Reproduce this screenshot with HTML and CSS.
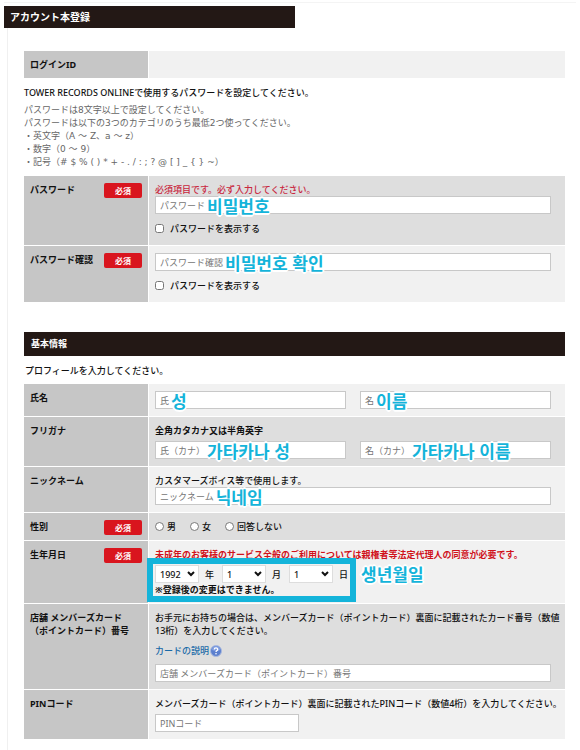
FILE: index.html
```html
<!DOCTYPE html>
<html lang="ja">
<head>
    <meta charset="UTF-8">
    <meta name="viewport" content="width=device-width, initial-scale=1">
    <title>アカウント本登録</title>
    <link rel="stylesheet" href="styles.css">
</head>
<body>
    <div class="page">
        <h1 class="page-title">アカウント本登録</h1>
        <form class="content">
            <div class="rows">
                <div class="row">
                    <div class="row-label">ログインID</div>
                    <div class="row-value"></div>
                </div>
            </div>

            <p class="lead">TOWER RECORDS ONLINEで使用するパスワードを設定してください。</p>
            <p class="rules">
                パスワードは8文字以上で設定してください。<br>
                パスワードは以下の3つのカテゴリのうち最低2つ使ってください。<br>
                ・英文字（A ～ Z、a ～ z）<br>
                ・数字（0 ～ 9）<br>
                ・記号（# $ % ( ) * + - . / : ; ? @ [ ] _ { } ~）
            </p>

            <div class="rows">
                <div class="row dark">
                    <div class="row-label">パスワード <span class="required">必須</span></div>
                    <div class="row-value tall">
                        <p class="error">必須項目です。必ず入力してください。</p>
                        <div class="field">
                            <input type="password" id="password">
                            <label for="password">パスワード <span class="note" lang="ko">비밀번호</span></label>
                        </div>
                        <label class="check"><input type="checkbox"> パスワードを表示する</label>
                    </div>
                </div>
                <div class="row">
                    <div class="row-label">パスワード確認 <span class="required">必須</span></div>
                    <div class="row-value tall">
                        <div class="field">
                            <input type="password" id="confirm">
                            <label for="confirm">パスワード確認 <span class="note" lang="ko">비밀번호 확인</span></label>
                        </div>
                        <label class="check"><input type="checkbox"> パスワードを表示する</label>
                    </div>
                </div>
            </div>

            <h2 class="section-title">基本情報</h2>
            <p class="intro">プロフィールを入力してください。</p>

            <div class="rows">
                <div class="row">
                    <div class="row-label">氏名</div>
                    <div class="row-value">
                        <div class="pair">
                            <div class="field">
                                <input type="text" id="last-name">
                                <label for="last-name">氏 <span class="note" lang="ko">성</span></label>
                            </div>
                            <div class="field">
                                <input type="text" id="first-name">
                                <label for="first-name">名 <span class="note" lang="ko">이름</span></label>
                            </div>
                        </div>
                    </div>
                </div>
                <div class="row dark">
                    <div class="row-label">フリガナ</div>
                    <div class="row-value">
                        <p class="hint bold">全角カタカナ又は半角英字</p>
                        <div class="pair">
                            <div class="field">
                                <input type="text" id="last-kana">
                                <label for="last-kana">氏（カナ） <span class="note" lang="ko">가타카나 성</span></label>
                            </div>
                            <div class="field">
                                <input type="text" id="first-kana">
                                <label for="first-kana">名（カナ） <span class="note" lang="ko">가타카나 이름</span></label>
                            </div>
                        </div>
                    </div>
                </div>
                <div class="row">
                    <div class="row-label">ニックネーム</div>
                    <div class="row-value">
                        <p>カスタマーズボイス等で使用します。</p>
                        <div class="field">
                            <input type="text" id="nickname">
                            <label for="nickname">ニックネーム <span class="note" lang="ko">닉네임</span></label>
                        </div>
                    </div>
                </div>
                <div class="row dark">
                    <div class="row-label">性別 <span class="required">必須</span></div>
                    <div class="row-value radios">
                        <label><input type="radio" name="gender"> 男</label>
                        <label><input type="radio" name="gender"> 女</label>
                        <label><input type="radio" name="gender"> 回答しない</label>
                    </div>
                </div>
                <div class="row">
                    <div class="row-label">生年月日 <span class="required">必須</span></div>
                    <div class="row-value">
                        <p class="hint warning">未成年のお客様のサービス全般のご利用については親権者等法定代理人の同意が必要です。</p>
                        <div class="birthday">
                            <div class="birthday-box">
                                <div class="dates">
                                    <div class="select">
                                        <select id="year"><option>1992</option></select>
                                        <svg viewBox="0 0 8 6"><path d="M1 1l3 3 3-3"/></svg>
                                    </div>
                                    <label for="year">年</label>
                                    <div class="select">
                                        <select id="month"><option>1</option></select>
                                        <svg viewBox="0 0 8 6"><path d="M1 1l3 3 3-3"/></svg>
                                    </div>
                                    <label for="month">月</label>
                                    <div class="select">
                                        <select id="day"><option>1</option></select>
                                        <svg viewBox="0 0 8 6"><path d="M1 1l3 3 3-3"/></svg>
                                    </div>
                                    <label for="day">日</label>
                                </div>
                                <p class="bold">※登録後の変更はできません。</p>
                            </div>
                            <span class="note" lang="ko">생년월일</span>
                        </div>
                    </div>
                </div>
                <div class="row dark">
                    <div class="row-label"><span>店舗 メンバーズカード<br>（ポイントカード）番号</span></div>
                    <div class="row-value">
                        <p>お手元にお持ちの場合は、メンバーズカード（ポイントカード）裏面に記載されたカード番号（数値13桁）を入力してください。</p>
                        <a class="help" href="#">カードの説明
                            <svg viewBox="0 0 12 12">
                                <circle cx="6" cy="6" r="5.5" fill="#5b7fce" stroke="#a9b9de"/>
                                <path d="M2 5a4 4 0 0 1 8 0q-4 2-8 0z" fill="#7f9de0"/>
                                <path d="M4.3 4.6c0-2.3 3.4-2.2 3.4-.2C7.7 5.6 6 5.6 6 7" fill="none" stroke="#fff" stroke-width="1.3"/>
                                <circle cx="6" cy="8.8" r=".8" fill="#fff"/>
                            </svg>
                        </a>
                        <div class="field">
                            <input type="text" id="card">
                            <label for="card">店舗 メンバーズカード（ポイントカード）番号</label>
                        </div>
                    </div>
                </div>
                <div class="row">
                    <div class="row-label">PINコード</div>
                    <div class="row-value">
                        <p class="hint">メンバーズカード（ポイントカード）裏面に記載されたPINコード（数値4桁）を入力してください。</p>
                        <div class="field short">
                            <input type="text" id="pin">
                            <label for="pin">PINコード</label>
                        </div>
                    </div>
                </div>
            </div>
        </form>
    </div>
</body>
</html>
```
FILE: styles.css
```css
* {
    box-sizing: border-box;
}
body {
    margin: 0;
    background-color: #fff;
    color: #111;
    font-family: "Noto Sans", "Noto Sans CJK JP", sans-serif;
    font-size: 9px;
    font-weight: 500;
    line-height: 13px;
}
h1, h2, p {
    margin: 0;
}
.page {
    margin: 2px 4px 0;
    padding-top: 3px;
    border-top: 1px solid #f4f4f4;
}
.page-title {
    width: 291px;
    padding: 0 6px;
    background-color: #231815;
    color: #fff;
    font-size: 10px;
    line-height: 22px;
}
.content {
    margin-left: 3px;
    padding: 23px 11px 11px 16px;
    border-left: 1px solid #f0f0f0;
}

/* label / value rows */
.rows {
    display: grid;
    gap: 1px;
}
.row {
    display: grid;
    grid-template-columns: 124px minmax(0, 1fr);
    gap: 1px;
}
.row-label {
    display: flex;
    justify-content: space-between;
    align-items: flex-start;
    padding: 7px 6px;
    background-color: #c6c6c6;
    font-weight: bold;
}
.row-value {
    padding: 7px 2px 7px 6px;
    background-color: #f1f1f1;
}
.dark .row-value {
    background-color: #dedede;
}
.row-value.tall {
    padding-bottom: 10px;
}
.required {
    width: 38px;
    margin-bottom: -2px;
    border-radius: 2px;
    background-color: #d9151e;
    color: #fff;
    font-size: 8px;
    line-height: 15px;
    text-align: center;
}

/* texts */
.lead {
    margin: 8px 0 5px;
}
.rules {
    margin-bottom: 7px;
    color: #666;
    font-family: "DejaVu Sans", "Noto Sans CJK JP", sans-serif;
    font-weight: normal;
}
.section-title {
    margin-top: 30px;
    padding: 0 7px;
    background-color: #231815;
    color: #fff;
    font-size: 9px;
    line-height: 24px;
}
.intro {
    padding: 8px 1px 7px;
}
.hint {
    margin-bottom: 4px;
}
.bold {
    font-weight: bold;
}
.error {
    color: #c9283e;
}
.warning {
    color: #d0121b;
    font-weight: bold;
}
.note {
    color: #14b4da;
    font-family: "Noto Sans CJK KR", sans-serif;
    font-size: 17px;
    font-weight: bold;
    line-height: 17px;
    text-shadow: 2px 0 #fff, -2px 0 #fff, 0 2px #fff, 0 -2px #fff, 1px 1px #fff, -1px 1px #fff, 1px -1px #fff, -1px -1px #fff;
}

/* fields */
.field {
    position: relative;
    margin-right: 12px;
}
.field input {
    display: block;
    width: 100%;
    height: 18px;
    padding: 0 5px;
    border: 1px solid #c8c8c8;
    background-color: #fff;
    font: inherit;
}
.field label {
    position: absolute;
    top: 0;
    left: 5px;
    display: flex;
    align-items: center;
    gap: 2px;
    height: 18px;
    color: #757575;
    font-weight: normal;
    white-space: nowrap;
}
.pair {
    display: grid;
    grid-template-columns: 1fr 1fr;
    gap: 14px;
    margin-right: 12px;
}
.pair .field {
    margin-right: 0;
}
.short {
    width: 144px;
}
.check {
    display: flex;
    align-items: center;
    gap: 6px;
    margin-top: 8px;
}
.check input, .radios input {
    width: 9px;
    height: 9px;
    margin: 0;
}
.radios {
    display: flex;
    gap: 14px;
}
.radios label {
    display: flex;
    align-items: center;
    gap: 3px;
}

/* date of birth */
.birthday {
    display: flex;
    gap: 13px;
}
.birthday-box {
    position: relative;
}
.birthday-box::after {
    content: "";
    position: absolute;
    inset: -7px -8px -6px;
    border: 6px solid #14b4da;
    pointer-events: none;
}
.dates {
    display: flex;
    align-items: center;
}
.dates label {
    padding: 0 8px 0 6px;
}
.dates label:last-child {
    padding-right: 0;
}
.select {
    position: relative;
}
.select select {
    display: block;
    appearance: none;
    width: 44px;
    height: 18px;
    padding: 0 4px;
    border: 1px solid #ddd;
    border-radius: 0;
    background-color: #fff;
    color: #111;
    font: inherit;
}
.select svg {
    position: absolute;
    top: 6px;
    right: 4px;
    width: 8px;
    height: 6px;
    fill: none;
    stroke: #111;
    stroke-width: 2;
    pointer-events: none;
}
.help {
    display: flex;
    align-items: center;
    gap: 1px;
    width: max-content;
    height: 13px;
    margin: 7px 0;
    color: #1a6aa8;
    text-decoration: none;
}
.help svg {
    width: 12px;
    height: 12px;
}
```
